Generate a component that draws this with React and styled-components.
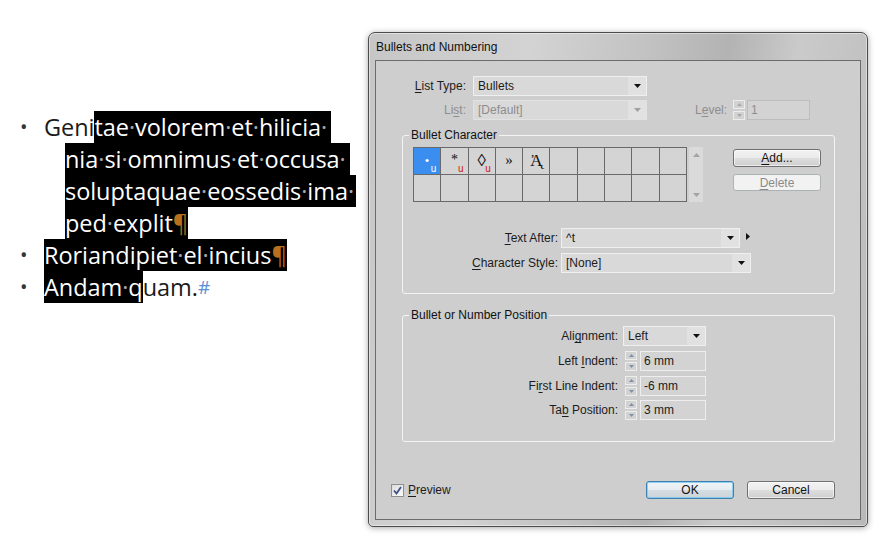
import React from 'react'
import styled, { createGlobalStyle, css } from 'styled-components'

const GlobalStyle = createGlobalStyle`
  html, body {
    margin: 0;
    padding: 0;
    background: #ffffff;
  }
`

const uiFont = `"Liberation Sans", Arial, sans-serif`

const Page = styled.div`
  display: flex;
  align-items: flex-start;
  width: 882px;
  height: 557px;
  overflow: hidden;
  background: #fff;
`

/* ---------- document text on the left ---------- */

const DocColumn = styled.div`
  width: 368px;
  padding-top: 111px;
  font-family: "Open Sans", "Noto Sans", sans-serif;
  font-size: 23.5px;
  letter-spacing: -0.05px;
  color: #1b1b1b;
`

const TextLine = styled.div`
  display: flex;
  height: 32px;
  line-height: 32px;
  white-space: pre;
  padding-left: ${({ $indent }) => $indent || 0}px;
`

const BulletMark = styled.span`
  width: 44px;
  padding-left: 20px;
  box-sizing: border-box;
  color: #333;
  font-size: 20px;
`

const Sel = styled.span`
  display: inline-block;
  height: 32px;
  background: #000;
  color: #fff;
  padding-right: ${({ $pad }) => $pad || 0}px;
`

const Dot = styled.span`
  color: ${({ $onDark }) => ($onDark ? '#a8a8a8' : '#8a8a8a')};
`

const Pilcrow = styled.span`
  color: #b8701c;
`

const Hash = styled.span`
  color: #5b8fd8;
  font-size: 19px;
`

const words = (text, onDark) =>
  text.split(' ').flatMap((w, i, arr) =>
    i < arr.length - 1 ? [w, <Dot key={i} $onDark={onDark}>·</Dot>] : [w]
  )

/* ---------- dialog ---------- */

const Dialog = styled.div`
  margin-top: 32px;
  width: 500px;
  height: 495px;
  box-sizing: border-box;
  display: flex;
  flex-direction: column;
  padding: 0 6px 6px;
  border: 1px solid #4c4c4c;
  border-radius: 7px 7px 5px 5px;
  background: linear-gradient(100deg, #c6c6c6 0%, #d3d3d3 28%, #c2c2c2 48%, #b3b3b3 62%, #cacaca 74%, #b8b8b8 100%);
  box-shadow: inset 0 0 0 1px rgba(255, 255, 255, 0.45), 0 1px 6px rgba(0, 0, 0, 0.35);
  font-family: ${uiFont};
  font-size: 12px;
  color: #1c1c1c;
`

const TitleBar = styled.div`
  height: 27px;
  display: flex;
  align-items: center;
  padding-left: 1px;
  font-size: 12px;
  color: #111;
`

const Client = styled.div`
  flex: 1;
  display: flex;
  flex-direction: column;
  padding: 15px 25px 20px 26px;
  border: 1px solid #6c6c6c;
  background: #cecece;
`

const Row = styled.div`
  display: flex;
  align-items: center;
  height: 20px;
  margin-top: ${({ $top }) => $top || 0}px;
`

const Label = styled.span`
  width: ${({ $w }) => $w}px;
  margin-right: ${({ $gap }) => ($gap == null ? 7 : $gap)}px;
  margin-left: ${({ $left }) => $left || 0}px;
  text-align: ${({ $w }) => ($w ? 'right' : 'left')};
  flex-shrink: 0;
  white-space: nowrap;
  color: ${({ $disabled }) => ($disabled ? '#8d8d8d' : '#1c1c1c')};
  u { text-decoration-thickness: 1px; text-underline-offset: 2px; }
`

const Combo = styled.div`
  display: flex;
  align-items: stretch;
  width: ${({ $w }) => $w}px;
  height: 20px;
  box-sizing: border-box;
  border: 1px solid ${({ $disabled }) => ($disabled ? '#e2e2e2' : '#efefef')};
  background: #d9d9d9;
  color: ${({ $disabled }) => ($disabled ? '#8d8d8d' : '#1c1c1c')};
`

const ComboValue = styled.span`
  flex: 1;
  display: flex;
  align-items: center;
  padding-left: 4px;
`

const ComboButton = styled.span`
  width: 18px;
  display: flex;
  align-items: center;
  justify-content: center;
  background: #e1e1e1;
`

const DownArrow = ({ color = '#111' }) => (
  <svg width="7" height="4" viewBox="0 0 7 4">
    <path d="M0 0 H7 L3.5 4 Z" fill={color} />
  </svg>
)

const Select = ({ w, value, disabled }) => (
  <Combo $w={w} $disabled={disabled}>
    <ComboValue>{value}</ComboValue>
    <ComboButton>
      <DownArrow color={disabled ? '#a0a0a0' : '#111'} />
    </ComboButton>
  </Combo>
)

const Spinner = styled.div`
  display: flex;
  flex-direction: column;
  justify-content: space-between;
  width: 12px;
  height: 20px;
  margin-right: ${({ $gap }) => $gap}px;
  flex-shrink: 0;
`

const SpinHalf = styled.span`
  height: 9px;
  box-sizing: border-box;
  border: 1px solid #ededed;
  background: #d2d2d2;
  display: flex;
  align-items: center;
  justify-content: center;
`

const SpinButtons = ({ gap, disabled }) => {
  const c = disabled ? '#a9a9a9' : '#7f91aa'
  return (
    <Spinner $gap={gap}>
      <SpinHalf>
        <svg width="5" height="3" viewBox="0 0 5 3"><path d="M0 3 H5 L2.5 0 Z" fill={c} /></svg>
      </SpinHalf>
      <SpinHalf>
        <svg width="5" height="3" viewBox="0 0 5 3"><path d="M0 0 H5 L2.5 3 Z" fill={c} /></svg>
      </SpinHalf>
    </Spinner>
  )
}

const NumField = styled.div`
  width: ${({ $w }) => $w}px;
  height: 20px;
  box-sizing: border-box;
  display: flex;
  align-items: center;
  padding-left: 3px;
  border: 1px solid ${({ $disabled }) => ($disabled ? '#bdbdbd' : '#eeeeee')};
  background: #d3d3d3;
  color: ${({ $disabled }) => ($disabled ? '#8d8d8d' : '#1c1c1c')};
`

const Group = styled.fieldset`
  margin: ${({ $top }) => $top}px 0 0;
  padding: ${({ $pt }) => $pt}px 10px ${({ $pb }) => $pb}px;
  border: 1px solid #f4f4f4;
  border-radius: 3px;
  min-width: 0;
`

const Legend = styled.legend`
  margin-left: -4px;
  padding: 0 2px;
  line-height: 14px;
  font-size: 12px;
  color: #111;
`

const CharRow = styled.div`
  display: flex;
  align-items: flex-start;
`

const CharGrid = styled.div`
  display: grid;
  grid-template-columns: repeat(10, 1fr);
  grid-auto-rows: 1fr;
  gap: 1px;
  width: 274px;
  height: 55px;
  box-sizing: border-box;
  padding: 1px;
  background: #696969;
`

const Cell = styled.div`
  position: relative;
  display: flex;
  align-items: center;
  justify-content: center;
  padding-bottom: 2px;
  box-sizing: border-box;
  background: ${({ $selected }) => ($selected ? '#3a8ef0' : '#d4d4d4')};
  color: ${({ $selected }) => ($selected ? '#fff' : '#111')};
  font-family: "Liberation Serif", "DejaVu Serif", serif;
  font-size: ${({ $size }) => $size || 15}px;
  line-height: 1;
`

const UBadge = styled.span`
  position: absolute;
  right: 4px;
  bottom: 0;
  font-family: ${uiFont};
  font-size: 10px;
  line-height: 11px;
  color: ${({ $selected }) => ($selected ? '#fff' : '#d11414')};
`

const ScrollTrack = styled.div`
  width: 14px;
  height: 55px;
  margin-left: 2px;
  display: flex;
  flex-direction: column;
  justify-content: space-between;
  align-items: center;
  padding: 6px 0 5px;
  box-sizing: border-box;
  background: #dadada;
`

const SideButtons = styled.div`
  display: flex;
  flex-direction: column;
  gap: 7px;
  margin-left: 30px;
  margin-top: 2px;
`

const PushButton = styled.div`
  width: 88px;
  height: ${({ $h }) => $h || 18}px;
  box-sizing: border-box;
  display: flex;
  align-items: center;
  justify-content: center;
  border-radius: 3px;
  border: 1px solid #707070;
  background: linear-gradient(#f2f2f2 0%, #ebebeb 50%, #dddddd 51%, #cfcfcf 100%);
  box-shadow: inset 0 0 0 1px rgba(255, 255, 255, 0.6);
  color: #111;
  u { text-decoration-thickness: 1px; text-underline-offset: 2px; }
  ${({ $disabled }) => $disabled && css`
    border-color: #adb2b5;
    background: #f2f2f2;
    box-shadow: none;
    color: #8a8a8a;
  `}
  ${({ $default }) => $default && css`
    border-color: #3c7fb1;
    box-shadow: inset 0 0 0 1px rgba(120, 200, 240, 0.8);
    background: linear-gradient(#f0f4f7 0%, #e6ecf0 50%, #d6dde2 51%, #cbd3d9 100%);
  `}
`

const NudgeArrow = styled.span`
  margin-left: 6px;
  margin-top: -4px;
  display: flex;
`

const Footer = styled.div`
  margin: auto 0 0 -11px;
  display: flex;
  align-items: center;
`

const Check = styled.span`
  width: 13px;
  height: 13px;
  box-sizing: border-box;
  border: 1px solid #8e8f8f;
  background: linear-gradient(135deg, #dcdcdc, #fbfbfb);
  display: flex;
  align-items: center;
  justify-content: center;
  margin-right: 4px;
`

const FooterButtons = styled.div`
  margin-left: auto;
  display: flex;
  gap: 13px;
`

const chars = [
  { g: '•', size: 13, sel: true, u: true },
  { g: '*', size: 14, u: true },
  { g: '◊', size: 17, u: true },
  { g: '»', size: 15 },
  { g: 'Ἀ\u0328', size: 17 }
]

const cells = Array.from({ length: 20 }, (_, i) => chars[i] || null)

const App = () => (
  <>
    <GlobalStyle />
    <Page>
      <DocColumn>
        <TextLine>
          <BulletMark>•</BulletMark>
          Geni
          <Sel $pad={4}>{words('tae volorem et hilicia ', true)}</Sel>
        </TextLine>
        <TextLine $indent={65}>
          <Sel $pad={4}>{words('nia si omnimus et occusa ', true)}</Sel>
        </TextLine>
        <TextLine $indent={65}>
          <Sel $pad={2}>{words('soluptaquae eossedis ima ', true)}</Sel>
        </TextLine>
        <TextLine $indent={65}>
          <Sel>{words('ped explit', true)}<Pilcrow>¶</Pilcrow></Sel>
        </TextLine>
        <TextLine>
          <BulletMark>•</BulletMark>
          <Sel>{words('Roriandipiet el incius', true)}<Pilcrow>¶</Pilcrow></Sel>
        </TextLine>
        <TextLine>
          <BulletMark>•</BulletMark>
          <Sel>Andam<Dot $onDark>·</Dot>q</Sel>
          uam.<Hash>#</Hash>
        </TextLine>
      </DocColumn>

      <Dialog>
        <TitleBar>Bullets and Numbering</TitleBar>
        <Client>
          <Row>
            <Label $w={64}><u>L</u>ist Type:</Label>
            <Select w={174} value="Bullets" />
          </Row>
          <Row $top={4}>
            <Label $w={64} $disabled>Li<u>s</u>t:</Label>
            <Select w={174} value="[Default]" disabled />
            <Label $left={48} $gap={6} $disabled>L<u>e</u>vel:</Label>
            <SpinButtons gap={2} disabled />
            <NumField $w={63} $disabled>1</NumField>
          </Row>

          <Group $top={8} $pt={5} $pb={20}>
            <Legend>Bullet Character</Legend>
            <CharRow>
              <CharGrid>
                {cells.map((c, i) => (
                  <Cell key={i} $selected={c && c.sel} $size={c && c.size}>
                    {c && c.g}
                    {c && c.u && <UBadge $selected={c.sel}>u</UBadge>}
                  </Cell>
                ))}
              </CharGrid>
              <ScrollTrack>
                <svg width="7" height="4" viewBox="0 0 7 4"><path d="M0 4 H7 L3.5 0 Z" fill="#a3a3a3" /></svg>
                <svg width="7" height="4" viewBox="0 0 7 4"><path d="M0 0 H7 L3.5 4 Z" fill="#a3a3a3" /></svg>
              </ScrollTrack>
              <SideButtons>
                <PushButton><span><u>A</u>dd...</span></PushButton>
                <PushButton $h={17} $disabled><span><u>D</u>elete</span></PushButton>
              </SideButtons>
            </CharRow>
            <Row $top={26}>
              <Label $w={145} $gap={3}><u>T</u>ext After:</Label>
              <Select w={179} value="^t" />
              <NudgeArrow>
                <svg width="4" height="7" viewBox="0 0 4 7"><path d="M0 0 L4 3.5 L0 7 Z" fill="#111" /></svg>
              </NudgeArrow>
            </Row>
            <Row $top={5}>
              <Label $w={145} $gap={3}><u>C</u>haracter Style:</Label>
              <Select w={190} value="[None]" />
            </Row>
          </Group>

          <Group $top={14} $pt={4} $pb={21}>
            <Legend>Bullet or Number Position</Legend>
            <Row>
              <Label $w={205} $gap={5}>Ali<u>g</u>nment:</Label>
              <Select w={83} value="Left" />
            </Row>
            <Row $top={5}>
              <Label $w={205}>Left <u>I</u>ndent:</Label>
              <SpinButtons gap={3} />
              <NumField $w={66}>6 mm</NumField>
            </Row>
            <Row $top={5}>
              <Label $w={205}>Fi<u>r</u>st Line Indent:</Label>
              <SpinButtons gap={3} />
              <NumField $w={66}>-6 mm</NumField>
            </Row>
            <Row $top={4}>
              <Label $w={205}>Ta<u>b</u> Position:</Label>
              <SpinButtons gap={3} />
              <NumField $w={66}>3 mm</NumField>
            </Row>
          </Group>

          <Footer>
            <Check>
              <svg width="9" height="9" viewBox="0 0 9 9">
                <path d="M1 4.5 L3.5 7.5 L8 1" stroke="#3d5088" strokeWidth="1.8" fill="none" />
              </svg>
            </Check>
            <Label><u>P</u>review</Label>
            <FooterButtons>
              <PushButton $default>OK</PushButton>
              <PushButton>Cancel</PushButton>
            </FooterButtons>
          </Footer>
        </Client>
      </Dialog>
    </Page>
  </>
)

export default App
